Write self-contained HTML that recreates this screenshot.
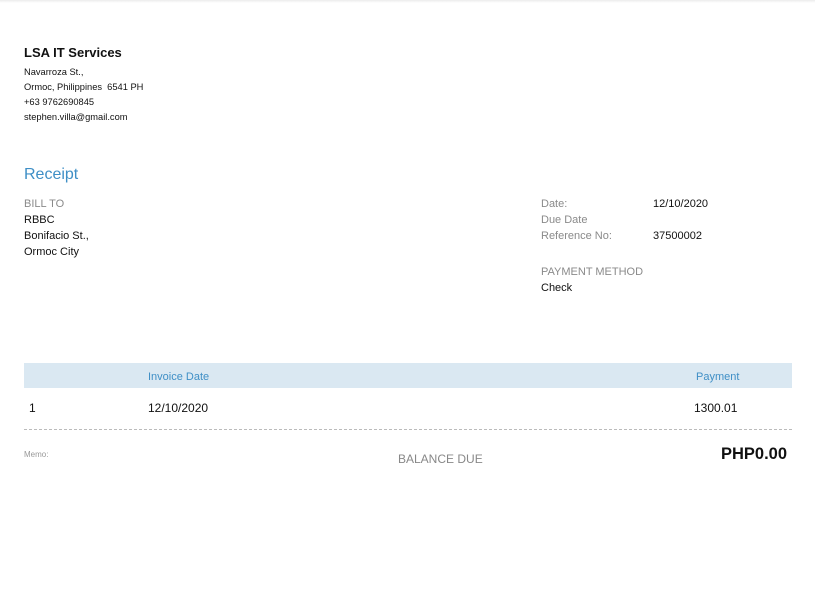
<!DOCTYPE html>
<html><head><style>
body{margin:0;width:815px;height:607px;background:#fff;font-family:"Liberation Sans",sans-serif;position:relative;overflow:hidden}
.a{position:absolute;white-space:nowrap}
.g{color:#8a8a8a;font-size:11px}
.k{color:#111;font-size:11px}
.s{font-size:9.3px;color:#111}
</style></head><body>
<div style="position:absolute;left:0;top:0;width:815px;height:3px;background:linear-gradient(#ececec,#fff)"></div>
<div class="a" style="left:24px;top:45px;font-size:13px;font-weight:bold;color:#111">LSA IT Services</div>
<div class="a s" style="left:24px;top:67px">Navarroza St.,</div>
<div class="a s" style="left:24px;top:82px">Ormoc, Philippines&nbsp; 6541 PH</div>
<div class="a s" style="left:24px;top:97px">+63 9762690845</div>
<div class="a s" style="left:24px;top:112px">stephen.villa@gmail.com</div>
<div class="a" style="left:24px;top:166px;font-size:16px;color:#3f8fc6">Receipt</div>
<div class="a g" style="left:24px;top:198px">BILL TO</div>
<div class="a k" style="left:24px;top:214px">RBBC</div>
<div class="a k" style="left:24px;top:230px">Bonifacio St.,</div>
<div class="a k" style="left:24px;top:246px">Ormoc City</div>
<div class="a g" style="left:541px;top:198px">Date:</div>
<div class="a k" style="left:653px;top:198px">12/10/2020</div>
<div class="a g" style="left:541px;top:214px">Due Date</div>
<div class="a g" style="left:541px;top:230px">Reference No:</div>
<div class="a k" style="left:653px;top:230px">37500002</div>
<div class="a g" style="left:541px;top:266px">PAYMENT METHOD</div>
<div class="a k" style="left:541px;top:282px">Check</div>
<div style="position:absolute;left:24px;top:363px;width:768px;height:25px;background:#dae8f2"></div>
<div class="a" style="left:148px;top:371px;font-size:11px;color:#3f8fc6">Invoice Date</div>
<div class="a" style="left:696px;top:371px;font-size:11px;color:#3f8fc6">Payment</div>
<div class="a" style="left:29px;top:401px;font-size:12px;color:#111">1</div>
<div class="a" style="left:148px;top:401px;font-size:12px;color:#111">12/10/2020</div>
<div class="a" style="left:694px;top:401px;font-size:12px;color:#111">1300.01</div>
<div style="position:absolute;left:24px;top:429px;width:768px;border-top:1px dashed #bbb"></div>
<div class="a" style="left:24px;top:450px;font-size:8px;color:#999">Memo:</div>
<div class="a" style="left:398px;top:452px;font-size:12px;color:#888">BALANCE DUE</div>
<div class="a" style="left:721px;top:445px;font-size:16.5px;font-weight:bold;color:#111">PHP0.00</div>
</body></html>
